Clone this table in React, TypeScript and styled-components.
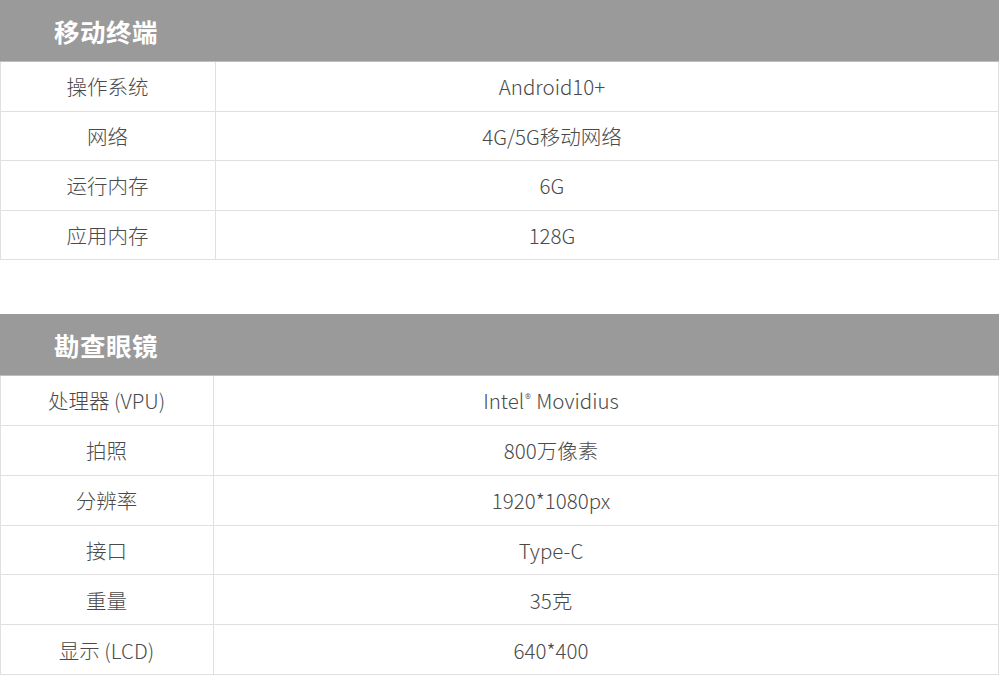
import React from "react";
import styled, { createGlobalStyle } from "styled-components";

const Global = createGlobalStyle`
  html, body { margin: 0; padding: 0; background: #ffffff; }
  body { font-family: "Noto Sans CJK SC", "Noto Sans", sans-serif; }
`;

const Page = styled.div`
  width: 999px;
  display: flex;
  flex-direction: column;
  gap: 54px;
`;

const Section = styled.section`
  display: flex;
  flex-direction: column;
  box-sizing: border-box;
  width: 999px;
`;

const Header = styled.div`
  height: 61px;
  box-sizing: content-box;
  background: #9a9a9a;
  border-bottom: 1px solid #bdbdbd;
  display: flex;
  align-items: center;
  padding-left: 54px;
  color: #ffffff;
  font-size: 25.5px;
  font-weight: 700;
  letter-spacing: 0.5px;
`;

const Row = styled.div<{ $label: number; $h: number }>`
  display: grid;
  grid-template-columns: ${(p) => p.$label}px 1fr;
  height: ${(p) => p.$h}px;
  box-sizing: border-box;
  border-left: 1px solid #e0e0e0;
  border-right: 1px solid #e0e0e0;
  border-bottom: 1px solid #e0e0e0;
  color: #4a4a4a;
  font-family: "Noto Sans CJK SC Light", "Source Han Sans SC Light", "Noto Sans CJK SC", sans-serif;
  font-size: 20.5px;
  font-weight: 300;
`;

const Label = styled.div`
  display: flex;
  align-items: center;
  justify-content: center;
  border-right: 1px solid #e0e0e0;
  padding-right: 1px;
  white-space: pre;
`;

const Value = styled.div`
  display: flex;
  align-items: center;
  justify-content: center;
  padding-right: 110px;
  white-space: pre;
`;

const Reg = styled.span`
  font-size: 12px;
  position: relative;
  top: -6px;
  margin: 0 1px 0 1px;
`;

type Spec = { label: string; value: React.ReactNode };

const mobile: Spec[] = [
  { label: "操作系统", value: "Android10+" },
  { label: "网络", value: "4G/5G移动网络" },
  { label: "运行内存", value: "6G" },
  { label: "应用内存", value: "128G" },
];

const glasses: Spec[] = [
  {
    label: "处理器 (VPU)",
    value: (
      <span>
        Intel<Reg>®</Reg> Movidius
      </span>
    ),
  },
  { label: "拍照", value: "800万像素" },
  { label: "分辨率", value: "1920*1080px" },
  { label: "接口", value: "Type-C" },
  { label: "重量", value: "35克" },
  { label: "显示 (LCD)", value: "640*400" },
];

function SpecTable({ title, rows, label, h }: { title: string; rows: Spec[]; label: number; h: number }) {
  return (
    <Section>
      <Header>{title}</Header>
      {rows.map((r) => (
        <Row key={r.label} $label={label} $h={h}>
          <Label>{r.label}</Label>
          <Value>{r.value}</Value>
        </Row>
      ))}
    </Section>
  );
}

export default function App() {
  return (
    <>
      <Global />
      <Page>
        <SpecTable title="移动终端" rows={mobile} label={215} h={49.5} />
        <SpecTable title="勘查眼镜" rows={glasses} label={213} h={49.85} />
      </Page>
    </>
  );
}
